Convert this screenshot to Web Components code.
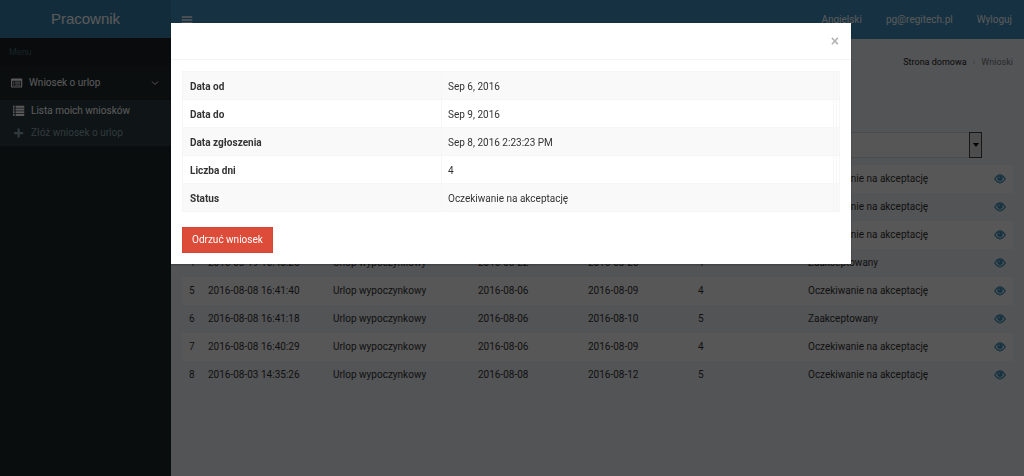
<!DOCTYPE html>
<html lang="pl">
<head>
<meta charset="utf-8">
<title>Pracownik</title>
<style>
body{margin:0;font:10px/16px "Source Sans Pro",Roboto,sans-serif;color:#333}
</style>
</head>
<body>
<leave-app></leave-app>
<script>
const define = (name, html, setup) => {
  customElements.define(name, class extends HTMLElement {
    connectedCallback() {
      if (this.shadowRoot) return;
      const t = document.createElement('template');
      t.innerHTML = html;
      this.attachShadow({mode: 'open'}).append(t.content.cloneNode(true));
      if (setup) setup(this, this.shadowRoot);
    }
  });
};

const shapes = {
  bars: '<path d="M1 3h14v2H1zM1 7h14v2H1zM1 11h14v2H1z"/>',
  list: '<path d="M0 1h2v2.500H0zM3.500 1H15v2.500H3.500zM0 4.700h2v2.500H0zM3.500 4.700H15v2.500H3.500zM0 8.400h2v2.500H0zM3.500 8.400H15v2.500H3.500zM0 12h2v2.500H0zM3.500 12H15v2.500H3.500z"/>',
  card: '<path fill-rule="evenodd" d="M1 2h13q1 0 1 1v10q0 1-1 1H1q-1 0-1-1V3q0-1 1-1zM1.500 5v7.500h12V5z"/><path opacity=".75" d="M2.500 6h2v1.500h-2zM5.500 6h7v1.500h-7zM2.500 8.200h2v1.500h-2zM5.500 8.200h7v1.500h-7zM2.500 10.400h2v1.400h-2zM5.500 10.400h7v1.400h-7z"/>',
  plus: '<path d="M6 2h3v4.500h4.500v3H9V14H6V9.500H1.500v-3H6z"/>',
  down: '<path d="M2 5l6 6 6-6" fill="none" stroke="currentColor" stroke-width="2"/>',
  eye: '<path d="M1 8Q8-3 15 8 8 18 1 8z" fill="none" stroke="currentColor" stroke-width="1.700"/><circle cx="8" cy="7" r="3.600"/><path d="M6.300 7A1.700 1.700 0 0 1 8 5.300" fill="none" stroke="#eee" stroke-width="1"/>'
};

define('ui-icon', `<style>
:host{display:inline-block;width:12px;height:12px}
svg{display:block;width:100%;height:100%;fill:currentColor}
</style><svg viewBox="0 0 16 16" aria-hidden="true"></svg>`, (el, root) => {
  root.querySelector('svg').innerHTML = shapes[el.getAttribute('name')];
});

define('side-menu', `<style>
:host{display:block;background:#1c2529;color:#fff}
.logo{display:grid;place-items:center;height:38px;background:#367fa9;color:#fff;font:15px/38px "Liberation Sans",Arial,sans-serif;text-decoration:none}
.head{padding:6px 9px;color:#4b646f;background:#1a2226;font-size:9px}
a{color:inherit;text-decoration:none}
.top{display:flex;align-items:center;gap:6px;height:34px;padding:0 12px 0 11px;background:#1e282c}
.top span{flex:1}
ul{margin:0;padding:0 0 2px;list-style:none;background:#2c3b41}
li a{display:flex;align-items:center;gap:6px;height:22px;padding:0 13px}
li .muted{color:#8aa4af}
ui-icon.small{width:8px;height:8px}
</style>
<a class="logo" href="#">Pracownik</a>
<div class="head">Menu</div>
<nav>
<a class="top" href="#"><ui-icon name="card"></ui-icon><span>Wniosek o urlop</span><ui-icon class="small" name="down"></ui-icon></a>
<ul>
<li><a href="#"><ui-icon name="list"></ui-icon>Lista moich wniosków</a></li>
<li><a class="muted" href="#"><ui-icon name="plus"></ui-icon>Złóż wniosek o urlop</a></li>
</ul>
</nav>`);

define('top-bar', `<style>
:host{display:flex;align-items:center;justify-content:space-between;height:39px;padding:0 12px 0 10px;background:#3c8dbc;color:#fff}
nav{display:flex;gap:24px}
a{color:inherit;text-decoration:none}
button{display:flex;border:0;padding:0;background:none;color:inherit}
</style>
<button type="button" aria-label="Menu"><ui-icon name="bars"></ui-icon></button>
<nav><a href="#">Angielski</a><a href="#">pg@regitech.pl</a><a href="#">Wyloguj</a></nav>`);

define('crumb-trail', `<style>
:host{display:flex;justify-content:flex-end;gap:6px;font-size:9px}
a{color:#222;text-decoration:none}
i{color:#aaa;font-style:normal}
span{color:#777}
</style><a href="#">Strona domowa</a><i>›</i><span>Wnioski</span>`);

define('status-filter', `<style>
:host{display:block;position:relative}
select{display:block;box-sizing:border-box;width:100%;height:26px;border:1px solid #d2d6de;border-radius:0;background:#f7f7f7;appearance:none;font:inherit}
i{position:absolute;top:0;right:0;bottom:0;width:11px;border:1px solid #444;background:#ddd;display:grid;place-items:center;pointer-events:none}
i::after{content:"";border:3px solid transparent;border-top:4px solid #000;border-bottom:0}
</style><select aria-label="Status"><option></option></select><i></i>`);

const rows = [
  ['', '', '', '', '', '', 'Oczekiwanie na akceptację'],
  ['', '', '', '', '', '', 'Oczekiwanie na akceptację'],
  ['', '', '', '', '', '', 'Oczekiwanie na akceptację'],
  [4, '2016-08-19 16:40:26', 'Urlop wypoczynkowy', '2016-08-22', '2016-08-25', 4, 'Zaakceptowany'],
  [5, '2016-08-08 16:41:40', 'Urlop wypoczynkowy', '2016-08-06', '2016-08-09', 4, 'Oczekiwanie na akceptację'],
  [6, '2016-08-08 16:41:18', 'Urlop wypoczynkowy', '2016-08-06', '2016-08-10', 5, 'Zaakceptowany'],
  [7, '2016-08-08 16:40:29', 'Urlop wypoczynkowy', '2016-08-06', '2016-08-09', 4, 'Oczekiwanie na akceptację'],
  [8, '2016-08-03 14:35:26', 'Urlop wypoczynkowy', '2016-08-08', '2016-08-12', 5, 'Oczekiwanie na akceptację']
];

define('leave-table', `<style>
:host{display:block}
table{width:100%;table-layout:fixed;border-collapse:collapse}
td{height:28px;box-sizing:border-box;padding:0 7px;white-space:nowrap}
tbody tr:nth-child(odd){background:#f9f9f9}
thead td{height:41px;padding:0 5px 0 7px}
a{display:flex;color:#3c8dbc}
</style>
<table>
<colgroup><col style="width:19px"><col style="width:125px"><col style="width:145px"><col style="width:110px"><col style="width:110px"><col style="width:110px"><col style="width:186px"><col style="width:26px"></colgroup>
<thead><tr><td colspan="6"></td><td><status-filter></status-filter></td><td></td></tr></thead>
<tbody></tbody>
</table>`, (el, root) => {
  root.querySelector('tbody').innerHTML = rows.map(r =>
    '<tr>' + r.map(c => `<td>${c}</td>`).join('') +
    '<td><a href="#" aria-label="Podgląd"><ui-icon name="eye"></ui-icon></a></td></tr>').join('');
});

define('request-dialog', `<style>
:host{display:block;width:680px;max-width:100%;background:#fff;box-shadow:0 1px 2px rgba(0,0,0,.3)}
header{display:flex;justify-content:flex-end;align-items:center;height:36px;padding:0 12px;border-bottom:1px solid #f4f4f4}
.close{border:0;padding:0;background:none;color:#b3b3b3;font:bold 14px/16px "Liberation Sans",Arial,sans-serif}
.body{padding:11px}
table{width:100%;table-layout:fixed;border-collapse:collapse}
th,td{height:28px;box-sizing:border-box;padding:2px 6px 0 7px;border:1px solid #f6f6f6;text-align:left}
td{padding-left:6px}
td.end{padding:0}
tr:nth-child(odd){background:#f9f9f9}
.reject{margin-top:15px;height:26px;padding:0 9px;border:1px solid #d94535;background:#dd4b39;color:#fff;font:inherit}
</style>
<header><button class="close" type="button" aria-label="Zamknij">×</button></header>
<div class="body">
<table>
<colgroup><col style="width:259px"><col><col style="width:3px"><col style="width:3px"></colgroup>
<tbody>
<tr><th scope="row">Data od</th><td>Sep 6, 2016</td><td class="end"></td><td class="end"></td></tr>
<tr><th scope="row">Data do</th><td>Sep 9, 2016</td><td class="end"></td><td class="end"></td></tr>
<tr><th scope="row">Data zgłoszenia</th><td>Sep 8, 2016 2:23:23 PM</td><td class="end"></td><td class="end"></td></tr>
<tr><th scope="row">Liczba dni</th><td>4</td><td class="end"></td><td class="end"></td></tr>
<tr><th scope="row">Status</th><td>Oczekiwanie na akceptację</td><td class="end"></td><td class="end"></td></tr>
</tbody>
</table>
<button class="reject" type="button">Odrzuć wniosek</button>
</div>`);

define('leave-app', `<style>
:host{display:grid;grid-template-columns:171px 1fr;min-height:100vh;position:relative}
.page{background:#ecf0f5}
crumb-trail{padding:15px 11px 54px}
leave-table{padding:0 11px}
.backdrop{position:fixed;inset:0;background:rgba(0,0,0,.65);display:flex;justify-content:center;align-items:flex-start;padding:23px 2px 0 0}
</style>
<side-menu></side-menu>
<div class="page"><top-bar></top-bar><main><crumb-trail></crumb-trail><leave-table></leave-table></main></div>
<div class="backdrop"><request-dialog role="dialog" aria-modal="true" aria-label="Wniosek"></request-dialog></div>`);
</script>
</body>
</html>
